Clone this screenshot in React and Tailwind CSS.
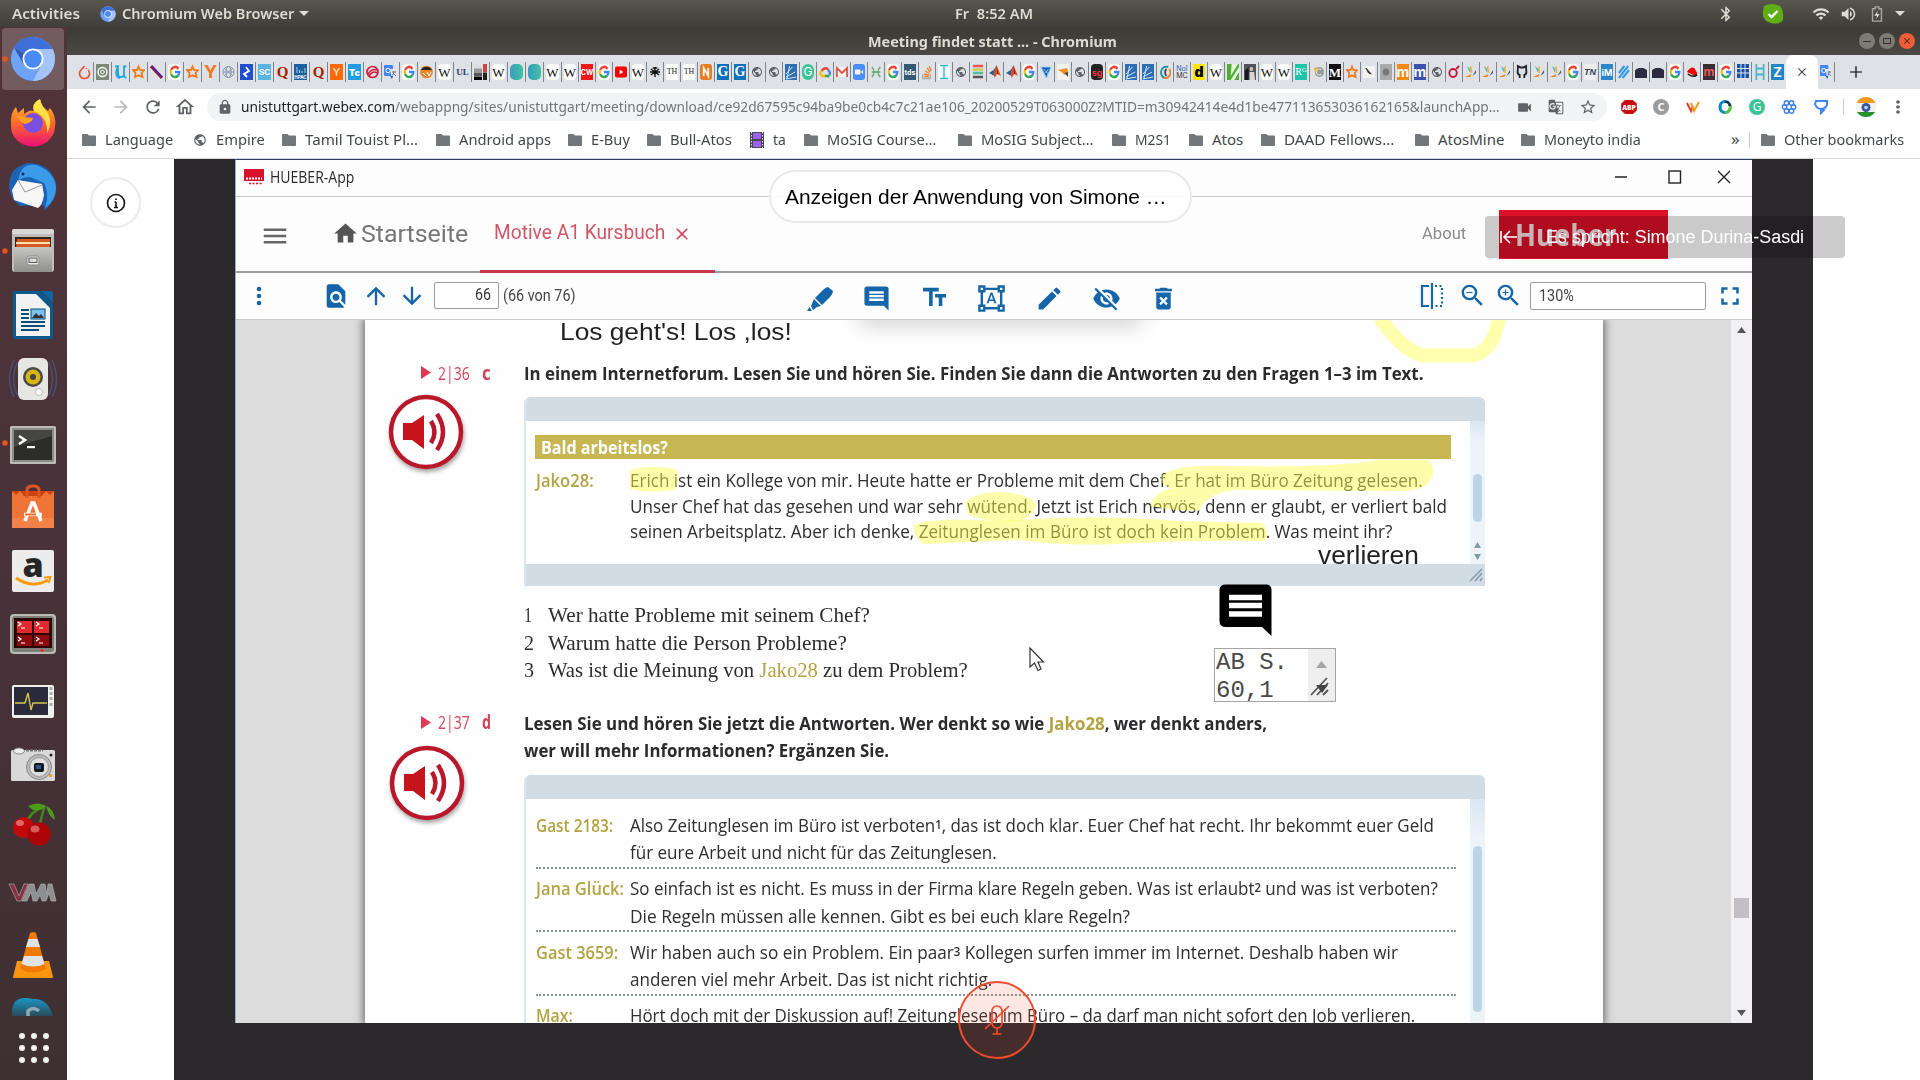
import React, { useLayoutEffect, useRef, useState } from "react";
import {
  MdComment, MdTextFields, MdEdit, MdVisibilityOff, MdFindInPage, MdArrowUpward, MdArrowDownward,
  MdDeleteForever, MdFormatShapes, MdZoomIn, MdZoomOut, MdFullscreen, MdHome, MdMenu, MdClose,
  MdLock, MdVideocam, MdStarBorder, MdGTranslate, MdArrowBack, MdArrowForward, MdRefresh,
  MdOutlineHome, MdMoreVert, MdBluetooth, MdWifi, MdVolumeUp, MdPublic, MdAdd,
} from "react-icons/md";

/* One line of text stretched or condensed to a given width */
function T({ w, className = "", children }) {
  const ref = useRef(null);
  const [s, setS] = useState(1);
  useLayoutEffect(() => {
    const n = ref.current.offsetWidth;
    if (n) setS(w / n);
  }, [w]);
  return (
    <span className={"block shrink-0 whitespace-pre " + className} style={{ width: w }}>
      <span ref={ref} className="inline-block origin-left" style={{ transform: `scaleX(${s})` }}>{children}</span>
    </span>
  );
}

function ChromiumIcon({ className }) {
  return (
    <svg viewBox="0 0 48 48" className={className}>
      <circle cx="24" cy="24" r="23" fill="#6ea3f7" />
      <path d="M24 24 L4.500 12 A23 23 0 0 1 44.500 14 L24 14 Z" fill="#3f6fd8" />
      <path d="M24 14 H44.500 A23 23 0 0 1 23 47 L33 29 Z" fill="#a4c4fb" />
      <path d="M4.500 12 L14 29 L24 24 Z" fill="#3560bd" />
      <circle cx="24" cy="24" r="11" fill="#fff" />
      <circle cx="24" cy="24" r="9" fill="#4a8af4" />
    </svg>
  );
}

const dock = [
  <g>
    <circle cx="33" cy="32" r="22" fill="#6ea3f7" />
    <path d="M33 32 L14 20.500 A22 22 0 0 1 52.500 22 L33 22 Z" fill="#3f6fd8" />
    <path d="M33 22 H52.500 A22 22 0 0 1 33 54 L42 37 Z" fill="#a4c4fb" />
    <path d="M14 20.500 L23.500 37 L33 32 Z" fill="#3058b0" />
    <circle cx="33" cy="32" r="10.500" fill="#fff" />
    <circle cx="33" cy="32" r="8.700" fill="#4a8af4" />
  </g>,
  <g>
    <path d="M11 33 Q10 22 16 16 L18 22 L24 17 L24 23 Q30 18 34 20 Q31 13 40 8 Q41 15 48 20 L50 17 Q57 26 55 36 A22 20 0 0 1 11 35 Z" fill="url(#ff)" />
    <path d="M34 20 Q31 13 40 8 Q41 15 48 22 Q53 32 47 42 Q48 26 34 20 Z" fill="#fff04a" opacity=".85" />
    <circle cx="33" cy="32" r="10" fill="#7a4fe0" />
    <path d="M17 25 Q24 26 33 27 Q33 31 25 33 Q20 31 17 25 Z" fill="#ffa020" />
  </g>,
  <g>
    <path d="M9 31 Q9 12 28 8 Q50 8 56 28 Q58 44 44 56 Q46 50 42 50 L20 51 Q10 44 9 31 Z" fill="#1d62b5" />
    <path d="M20 18 Q24 8 36 10 Q54 16 56 32 Q56 46 45 53 Q50 38 44 28 L30 22 Q22 22 18 26 Z" fill="#3c9be8" />
    <path d="M12 35 L18 25 L42 29 L44 40 Q42 51 38 53 L14 45 Z" fill="#f6f6f6" />
    <path d="M18 25 L25 37 L42 30" fill="none" stroke="#999" />
    <circle cx="23" cy="19" r="1.500" fill="#0c2c55" />
  </g>,
  <g>
    <rect x="12" y="10" width="42" height="43" rx="3" fill="#bdbdbb" />
    <rect x="12" y="10" width="42" height="5" rx="2" fill="#d8d8d6" />
    <rect x="15" y="18" width="36" height="11" fill="#33241c" />
    <path d="M17 20 H50 V29 H16 Z" fill="#d65a1e" />
    <rect x="16" y="23" width="34" height="2" fill="#fbe0b0" />
    <path d="M14 28 H52 V53 H14 Z" fill="url(#gr)" />
    <rect x="27" y="37" width="12" height="9" rx="2" fill="#eee" stroke="#888" />
    <rect x="29" y="39" width="8" height="4.500" fill="#ddd" stroke="#555" />
  </g>,
  <g>
    <path d="M15 8 H40 L53 21 V54 Q53 56 51 56 H15 Q13 56 13 54 V10 Q13 8 15 8 Z" fill="#0a5a8c" />
    <path d="M41 8 H51 Q53 8 53 10 V20 Z" fill="#0a69a5" />
    <path d="M16 11 H36 L50 25 V53 H16 Z" fill="#f2f2f2" />
    <path d="M21 27 H29 M21 31 H29 M21 35 H29 M21 39 H45 M21 43 H45 M21 47 H39" stroke="#0b4f7d" strokeWidth="2" />
    <rect x="31" y="26" width="14" height="10" fill="#7cc0ee" stroke="#0b4f7d" />
    <path d="M32 35 L36 30 L39 33 L41 31 L44 35 Z" fill="#333" />
  </g>,
  <g>
    <path d="M14 13 Q5 32 14 50 M17 16 Q10 32 17 48 M52 13 Q61 32 52 50 M49 16 Q56 32 49 48" fill="none" stroke="#4c5c8a" strokeWidth="1.500" opacity=".7" />
    <rect x="18" y="11" width="30" height="42" rx="6" fill="#e6e6e2" />
    <circle cx="33" cy="30" r="10" fill="#4a4a48" />
    <circle cx="33" cy="30" r="7.500" fill="#d8b416" />
    <circle cx="33" cy="30" r="3" fill="#444" />
    <circle cx="39" cy="45" r="3.500" fill="#fff" stroke="#bbb" />
  </g>,
  <g>
    <rect x="10" y="15" width="46" height="38" rx="1.500" fill="#bcbcb8" />
    <rect x="12" y="17" width="42" height="34" fill="#8c8c88" />
    <rect x="14" y="19" width="38" height="30" fill="#2c2d2b" />
    <path d="M14 19 H52 L52 25 L14 36 Z" fill="#454644" />
    <path d="M19 25 L25 29 L19 33" fill="none" stroke="#fff" strokeWidth="2.500" />
    <rect x="27" y="35" width="8" height="2.200" fill="#fff" />
  </g>,
  <g>
    <path d="M12 16 H54 L54 53 H12 Z" fill="#ee7537" />
    <path d="M12 16 H54 L50 20 L46 16 L42 21 H24 L20 16 L16 20 Z" fill="#c9430f" />
    <path d="M27 23 V15 Q27 11 33 11 Q39 11 39 15 V23" fill="none" stroke="#dd5420" strokeWidth="3" />
    <path d="M12 43 H54 V53 H12 Z" fill="#f48248" />
    <path d="M25 46 L32 28 H34 L41 46 M24 39.500 H42" fill="none" stroke="#fff" strokeWidth="3.500" />
    <rect x="25" y="38.500" width="11" height="2" fill="#ee6c2c" />
  </g>,
  <g>
    <rect x="12" y="11" width="42" height="42" rx="2" fill="#ececec" />
    <text x="33" y="38" textAnchor="middle" fontFamily="Open Sans, sans-serif" fontWeight="800" fontSize="34" fill="#262626">a</text>
    <path d="M16 39 Q32 50 48 41" fill="none" stroke="#ff9900" strokeWidth="2.800" />
    <path d="M44 38.500 L50.500 38 L48.500 44" fill="none" stroke="#ff9900" strokeWidth="2" />
  </g>,
  <g>
    <rect x="10" y="11" width="46" height="40" rx="4" fill="#b9bcb4" />
    <rect x="12" y="13" width="42" height="36" rx="3" fill="#7c8078" />
    <rect x="14" y="15" width="38" height="30" fill="#2e0505" />
    <path d="M17 18 H32 V30 H17 Z M34 18 H49 V30 H34 Z" fill="#e12a2d" />
    <path d="M17 32 H32 V43 H17 Z M34 32 H49 V43 H34 Z" fill="#8a0c0e" />
    <path d="M18 19 l3 2 l-3 2 M36 19 l3 2 l-3 2 M18 34 l3 2 l-3 2 M36 34 l3 2 l-3 2 M21 25 h4 M39 25 h4 M21 40 h4 M39 40 h4" stroke="#fff" fill="none" strokeWidth="1.200" />
    <circle cx="42" cy="47.500" r="1.500" fill="#f22" />
  </g>,
  <g>
    <rect x="12" y="18" width="42" height="33" rx="2" fill="#f1f1ee" />
    <rect x="14" y="20" width="34" height="28" fill="#2b2a3a" />
    <path d="M15 36 H25 L28 26 L31 43 L33 36 H47" fill="none" stroke="#d3c44a" strokeWidth="1.400" />
    <path d="M51 20 v3 M51 25 v3 M51 30 v3 M51 36 v3" stroke="#aaa" strokeWidth="3" />
  </g>,
  <g>
    <rect x="11" y="19" width="44" height="31" rx="1.500" fill="#d9d9d9" />
    <ellipse cx="19" cy="20" rx="5.500" ry="3" fill="#eee" stroke="#888" />
    <path d="M26 19.500 H43" stroke="#777" strokeWidth="2" strokeDasharray="3 1" />
    <circle cx="39" cy="36" r="12.500" fill="#bbb" stroke="#888" />
    <circle cx="39" cy="36" r="9.500" fill="#dedede" stroke="#999" />
    <rect x="34" y="32" width="10" height="9" rx="2" fill="#14151d" />
    <rect x="36" y="34" width="5" height="4" fill="#2a5594" />
    <circle cx="51" cy="24" r="1.500" fill="#222" />
    <rect x="49" y="43" width="3" height="3" fill="#eda02c" />
  </g>,
  <g>
    <path d="M27 27 Q30 17 44 11 M40 30 Q42 18 45 11" fill="none" stroke="#3f8a15" strokeWidth="2.500" />
    <path d="M28 11 Q38 6 46 11 Q40 17 33 15 Z M46 11 Q54 14 55 25 Q49 22 46 11 Z" fill="#4e9a1a" />
    <circle cx="23.500" cy="32.500" r="10.500" fill="#c2090b" />
    <circle cx="39" cy="39" r="11.800" fill="#ac0507" />
    <ellipse cx="20" cy="28" rx="4" ry="3" fill="#ec8080" opacity=".8" />
    <ellipse cx="35" cy="34" rx="4.500" ry="3.500" fill="#ec8080" opacity=".7" />
  </g>,
  <g>
    <path d="M9 25 H14 L19 37 L24 25 H28 L21 42 H17 Z" fill="#8d2d45" stroke="#9d9d9d" strokeWidth=".8" />
    <path d="M22 42 L29 25 H34 L36 35 L41 25 H45 L47 35 L48 25 H52 L56 42 H51 L49 34 L46 42 H42 L40 36 L37 42 H33 L31 33 L27 42 Z" fill="#8d9090" stroke="#b9b9b9" strokeWidth=".6" />
  </g>,
  <g>
    <path d="M17 38 H49 L53 54 Q53 55 52 55 H14 Q13 55 13 54 Z" fill="#fb9410" />
    <path d="M30 10 Q33 8 36 10 L46 46 Q33 53 20 46 Z" fill="#f07a05" />
    <path d="M28.500 16 H37.500 L40 24 H26 Z M24 33 H42 L44.500 41 Q33 46 21.500 41 Z" fill="#dfe3e6" />
  </g>,
  <g>
    <path d="M12 29 V22 Q14 11 24 11 Q30 11 33 12 Q48 11 53 29 Z" fill="url(#sk)" />
    <path d="M28 29 V24 Q33 19 39 24" fill="none" stroke="#8fa9b5" strokeWidth="3.500" />
  </g>,
];

function Dock() {
  return (
    <aside className="flex w-[67px] shrink-0 flex-col bg-linear-to-b from-[#513439] via-[#49323a] to-[#3e3032]">
      <svg className="absolute h-0 w-0">
        <defs>
          <linearGradient id="ff" x1="0" y1="0" x2="0" y2="1"><stop offset="0" stopColor="#ffc52c" /><stop offset=".5" stopColor="#ff6a2a" /><stop offset="1" stopColor="#ea0f78" /></linearGradient>
          <linearGradient id="gr" x1="0" y1="0" x2="0" y2="1"><stop offset="0" stopColor="#c6c6c4" /><stop offset="1" stopColor="#8f8f8c" /></linearGradient>
          <linearGradient id="sk" x1="0" y1="0" x2="0" y2="1"><stop offset="0" stopColor="#1a96c4" /><stop offset="1" stopColor="#2a4a5a" /></linearGradient>
          <linearGradient id="teal" x1="0" y1="0" x2="1" y2="0"><stop offset="0" stopColor="#3b9ac4" /><stop offset="1" stopColor="#3fc59b" /></linearGradient>
        </defs>
      </svg>
      {dock.map((g, i) => (
        <div key={i} className={i === 15 ? "h-[30px] overflow-hidden" : "relative h-16"}>
          {i === 0 && <div className="absolute top-px left-0.5 h-[62px] w-[62px] rounded bg-white/20" />}
          <svg width="67" height="64" viewBox="0 0 67 64" className="relative block">
            {g}
            {(i === 0 || i === 3 || i === 6) && <circle cx="5" cy="32" r="2.700" fill="#e95420" />}
          </svg>
        </div>
      ))}
      <div className="grid grid-cols-3 gap-1.5 self-center pt-4">
        {Array.from({ length: 9 }, (_, i) => <div key={i} className="h-1.5 w-1.5 rounded-full bg-[#f4f2f0]" />)}
      </div>
    </aside>
  );
}

/* ---- favicons ---- */
const label = (t, cls) => (
  <span className={"flex h-4 w-full items-center justify-center leading-none " + cls}>{t}</span>
);
const pic = (children) => <svg viewBox="0 0 13 16" preserveAspectRatio="none" className="h-4 w-full">{children}</svg>;
const fav = {
  flame: pic(<g fill="none" stroke="#ee4c2c" strokeWidth="1.600"><path d="M6.500 2 L3 6 A5 5 0 1 0 10 6" /><path d="M8.500 4 v1" /></g>),
  swirl: pic(<g><rect width="13" height="16" fill="#7b8a76" /><circle cx="6.500" cy="8" r="4.500" fill="none" stroke="#fff" strokeWidth="1.300" /><circle cx="6.500" cy="8" r="1.800" fill="none" stroke="#fff" /></g>),
  uda: pic(<path d="M1 2.500 L4 2 V9 Q4 13 7 13 Q10 13 10 9 V2.500 H12.500 M10 10 Q10 14 12.500 13.500 M4 3 Q1 8 3 12 Q4 14 6 14" fill="none" stroke="#1fa8dc" strokeWidth="1.800" />),
  star: pic(<path d="M6.500 2.500 L8 6 L12 6.300 L9.500 9 L10.500 13 L6.500 11.300 L3 13 L3.500 9 L1 6 L5 6 Z" fill="none" stroke="#f07a1a" strokeWidth="1.800" />),
  feather: pic(<g><path d="M1 2 L12 14" stroke="#a3143c" strokeWidth="3" /><path d="M2 2 L12 13" stroke="#3a28c0" strokeWidth="1.300" /></g>),
  g: (
    <span className="flex h-4 w-full items-center justify-center rounded-sm bg-white">
      <svg viewBox="0 0 24 24" preserveAspectRatio="none" className="h-3.5 w-3" fill="none" strokeWidth="4.500">
        <path d="M19 6.500 A9 9 0 0 0 4 8.500" stroke="#ea4335" /><path d="M4 8.500 A9 9 0 0 0 4 15.500" stroke="#fbbc05" />
        <path d="M4 15.500 A9 9 0 0 0 18.500 18" stroke="#34a853" /><path d="M18.500 18 A9 9 0 0 0 20.800 12 H12" stroke="#4285f4" />
      </svg>
    </span>
  ),
  yo: label("Y", "font-['Inter'] text-[18px] font-bold text-[#f07a1a]"),
  mesh: pic(<g fill="none" stroke="#8a9ab5"><circle cx="6.500" cy="8" r="5.500" /><ellipse cx="6.500" cy="8" rx="2.500" ry="5.500" /><path d="M1 8 H12 M2 4 L11 12 M11 4 L2 12" /></g>),
  top: pic(<g><rect width="13" height="16" fill="#204ecf" /><path d="M6 3 L9 7 L4 10 L7 13" fill="none" stroke="#fff" strokeWidth="1.800" /></g>),
  sc: label("SC", "bg-[#5cb4e4] font-['Inter'] text-[8px] font-bold text-white"),
  q: label("Q", "font-['Liberation_Serif'] text-[15px] font-bold text-[#a82400]"),
  hp: (
    <span className="flex h-4 w-full flex-col items-center justify-end bg-[#1b5f9e] font-['Inter'] text-[4.500px] leading-none font-bold text-white">
      <svg viewBox="0 0 10 7" className="mb-0.5 h-[7px] w-2.5"><path d="M1 0 V6 M3.500 3 V6 M6 4 V6 M9 1 V6" stroke="#a8d0f0" /></svg>HPAC
    </span>
  ),
  yb: label("Y", "bg-[#ff6a00] font-['Inter'] text-[11px] text-white"),
  tc: label("Tc", "bg-[#1f9de0] font-['Inter'] text-[9px] font-black text-white"),
  red: pic(<g fill="none" stroke="#d02040" strokeWidth="1.700"><circle cx="6.500" cy="8" r="5.500" /><path d="M2 10 Q6 4 11 6 M3 12 Q7 6 11 9" /></g>),
  tr: pic(<g><rect y="1" width="9" height="11" rx="1" fill="#4285f4" /><path d="M6 5 H13 V15 H8 Z" fill="#dfe6f2" /><path d="M9 12 L8 15 L6 12 Z" fill="#2f5bb0" /><circle cx="4" cy="6.500" r="2.200" fill="none" stroke="#fff" /><path d="M8 8 H12 M10 7 V8 L8.500 11.500 M9 9 L12 12" stroke="#777" fill="none" /></g>),
  badge: pic(<g><circle cx="6.500" cy="8" r="6.300" fill="#e8862a" /><path d="M1 6 A6.300 6.300 0 0 1 12 6 Z" fill="#2a2320" /><path d="M3 9 L6 12 M7 8 L9 12 L11 8" stroke="#fff" fill="none" /></g>),
  w: label("W", "rounded-sm bg-white font-['Liberation_Serif'] text-[13px] text-[#111]"),
  ul: label("UL", "font-['Liberation_Serif'] text-[9px] font-bold text-[#24406e]"),
  bars: pic(<g><rect width="8" height="4" fill="#ddd" /><rect y="4.500" width="8" height="3.500" fill="#999" /><rect y="8.500" width="8" height="3.500" fill="#555" /><rect y="12.500" width="8" height="3.500" fill="#000" /><rect x="9" width="4" height="8" fill="#c44" /><rect x="9" y="8.500" width="4" height="7.500" fill="#222" /></g>),
  teal: pic(<rect width="13" height="16" rx="5" fill="url(#teal)" />),
  cw: label("CW", "bg-[#f01818] font-['Inter'] text-[7px] font-bold text-white"),
  yt: pic(<g><rect y="2.500" width="13" height="11" rx="2" fill="#f00" /><path d="M5 5.500 L9 8 L5 10.500 Z" fill="#fff" /></g>),
  bug: pic(<path d="M6.500 3 V13 M2 5 L11 11 M11 5 L2 11 M1 8 H12 M4 4 H9" stroke="#111" strokeWidth="1.500" />),
  th: label("TH", "bg-white font-['Liberation_Serif'] text-[8px] text-[#222]"),
  n: pic(<g><rect width="13" height="16" rx="3" fill="#e87e22" /><path d="M4 12 V4 L9 12 V4" fill="none" stroke="#fff" strokeWidth="1.800" /></g>),
  gb: label("G", "bg-[#1070b8] font-['Liberation_Serif'] text-[14px] font-bold text-white"),
  globe: <MdPublic className="h-4 w-full text-[#5f6368]" />,
  sun: pic(<g><rect width="13" height="16" fill="#2f6db5" /><path d="M1 15 L12 13 M1 13 L11 8 M1 10 L8 3 M2 15 L5 2" stroke="#dceaf8" /></g>),
  gram: label("G", "rounded-md bg-[#3cc39a] font-['Inter'] text-[12px] text-white"),
  cloud: pic(<g fill="none" strokeWidth="2.500"><path d="M3 7 A4 4 0 0 1 10 6" stroke="#ea4335" /><path d="M10 6 Q12.500 8 11.500 11" stroke="#4285f4" /><path d="M11.500 12 H6" stroke="#34a853" /><path d="M6 12 H3 Q0 9 3 7" stroke="#fbbc05" /></g>),
  gm: pic(<g><rect y="3" width="13" height="10" fill="#f2f2f2" /><path d="M1 13 V4 L6.500 9 L12 4 V13" fill="none" stroke="#dd4b39" strokeWidth="1.800" /></g>),
  zoom: pic(<g><rect width="13" height="16" rx="3" fill="#4a8cf7" /><rect x="2" y="5.500" width="6" height="5" rx="1" fill="#fff" /><path d="M8.500 8 L11 6 V10 Z" fill="#fff" /></g>),
  gx: pic(<path d="M2 3 Q7 8 2 13 M11 3 Q6 8 11 13 M2 8 H11" fill="none" stroke="#5ba86e" strokeWidth="1.300" />),
  tds: label("tds", "bg-[#355876] font-['Inter'] text-[7px] font-bold text-white"),
  so: pic(<g fill="none" strokeWidth="1.400"><path d="M2 10 V14.500 H10 V10" stroke="#aaa" /><path d="M3.500 12.500 H8.500 M3.500 10 L8.500 11 M4.500 7 L9 9.500 M6.500 4 L10 8 M9 2 L11 7" stroke="#f48024" /></g>),
  i: pic(<g><rect width="13" height="16" fill="#fff" /><path d="M2 1.500 H11 M2 14.500 H11 M6.500 1.500 V14.500" stroke="#35b5c8" strokeWidth="1.500" /></g>),
  str: pic(<g><path d="M1 2 H12" stroke="#e55" strokeWidth="2.500" /><path d="M1 5.500 H12" stroke="#cc5" strokeWidth="2.500" /><path d="M1 9 H12" stroke="#5b9" strokeWidth="2.500" /><path d="M1 13 H12" stroke="#555" strokeWidth="2.500" /></g>),
  mat: pic(<g><path d="M0 9 L5 6 L8 2 L6 12 Z" fill="#2a5ca0" /><path d="M8 1 L13 12 L9 10 L6 14 L5 9 Z" fill="#d9541e" /><path d="M8 1 L10 10 L9 10 Z" fill="#5a1208" /></g>),
  tri: pic(<path d="M1 3 H12 L7 14 Z M4 5 L9 10 M9 5 L6 9" fill="#1d5fc0" stroke="#8fd0f0" />),
  hand: pic(<g><rect width="13" height="16" fill="#f3f1ec" /><path d="M1 6 L11 4 L12 8 L8 11 L5 8 Z" fill="#f09020" /><path d="M8 9 L12 8 V13 Z" fill="#444" /></g>),
  sg: label("sg", "rounded-sm bg-[#222] font-['Inter'] text-[9px] font-bold text-[#e34]"),
  c2: pic(<g fill="none" strokeWidth="1.900"><path d="M10 3 A5.500 5.500 0 1 0 6 14" stroke="#1b8fae" /><path d="M6 14 A5.500 5.500 0 0 0 11 5" stroke="#e9822a" /><path d="M8 5 Q5 8 8 12" stroke="#444" /></g>),
  noi: label(<span className="text-center font-['Inter'] text-[7px] leading-[7.500px]"><span className="text-[#2a6ab8]">NoI</span><br />MC</span>, "text-[#333]"),
  d: label("d", "bg-[#ffe600] font-['Inter'] text-[14px] font-black text-black"),
  green: pic(<g><rect width="13" height="16" fill="#e6f4dc" /><path d="M0 0 H5 L4 12 L12 0 H13 V3 L4 16 H0 Z" fill="#4cae32" /><path d="M8 16 L13 8 V16 Z" fill="#4cae32" /></g>),
  photo: pic(<g><rect width="13" height="16" fill="#50545c" /><path d="M1 16 V7 L5 3 V16 Z" fill="#16181c" /><circle cx="8" cy="5" r="2" fill="#d8c0b0" /><path d="M6 8 H11 L12 16 H6 Z" fill="#d5d5d8" /></g>),
  rg: label(<span>R<sup className="text-[7px]">G</sup></span>, "bg-[#1cc4ac] font-['Liberation_Serif'] text-[10px] text-white"),
  moon: pic(<g><circle cx="8" cy="8" r="5" fill="#999" /><path d="M2 4 L5 3 L6 7 L4 10 Z" fill="#f0b428" /><path d="M10 6 A3 3 0 1 0 10 10" fill="none" stroke="#ddd" strokeWidth="1.200" /></g>),
  mb: label("M", "bg-[#111] font-['Liberation_Serif'] text-[13px] font-bold text-white"),
  bird: pic(<g><rect y="2" width="13" height="12" fill="#f4f2ef" /><path d="M3 4 L9 10 L6 9 Z" fill="#333" stroke="#333" /></g>),
  gray: pic(<g><rect width="13" height="16" fill="#aaa" /><circle cx="6.500" cy="8" r="3.500" fill="#777" /></g>),
  mo: label("m", "bg-[#f58a12] font-['Inter'] text-[14px] font-bold text-white"),
  mu: label("m", "bg-[#3c50b0] font-['Inter'] text-[14px] font-bold text-white"),
  o: pic(<g fill="none" stroke="#c8143c" strokeWidth="2"><circle cx="5.500" cy="9" r="4" /><path d="M9 5 L12 2" /></g>),
  arr: pic(<g><path d="M2 2 L7 6 L5 8 Z" fill="#3fb2d8" /><path d="M0 13 L7 10 L6 13 Z" fill="#e58a2a" /><path d="M5 3 L7 2 L8 9 L6 9 Z" fill="#efb63c" /><path d="M8 12 L12 6 L12 9 Z" fill="#3a5b8c" /></g>),
  git: pic(<path d="M4 14 V11 Q1 10 2 6 L2 2 L5 3.500 H8 L11 2 L11 6 Q12 10 9 11 V14" fill="none" stroke="#24292e" strokeWidth="2" />),
  tn: label("TN", "bg-[#eceef0] font-['Liberation_Sans'] text-[9px] italic font-bold text-[#345]"),
  im: label("iM", "bg-[#2b86c8] font-['Inter'] text-[9px] font-bold text-white"),
  sl: pic(<path d="M1 9 L7 2 M1 14 L11 2 M5 14 L12 6" stroke="#2f9ae8" strokeWidth="2.200" />),
  cam: pic(<path d="M0 6 L4 4 H9 L13 6 V14 H0 Z" fill="#2e2a40" />),
  hat: pic(<g><path d="M1 8 Q5 2 9 4 L12 9 Q13 12 8 11 Z" fill="#e00" /><path d="M2 10 Q7 14 12 11" stroke="#111" strokeWidth="1.500" fill="none" /></g>),
  md: label("m", "bg-[#3a2c32] font-['Inter'] text-[12px] font-bold text-[#e65a5a]"),
  grid: pic(<g><rect width="13" height="14" fill="#1a54a0" /><path d="M0 4.500 H13 M0 9 H13 M4.300 0 V14 M8.700 0 V14" stroke="#e4ebf4" /></g>),
  h: pic(<path d="M2.500 0 V16 M10.500 0 V16 M2.500 4.500 H10.500 M2.500 10.500 H10.500" stroke="#49b8c8" strokeWidth="1.800" />),
  z: label("Z", "bg-[#2285c8] font-['Inter'] text-[13px] font-bold text-white"),
};
const wide = "flame swirl uda star feather g star yo mesh top sc q hp q yb tc red tr g badge w ul bars w teal teal w".split(" ");
const narrow = ("w cw g yt w bug th th n gb gb globe globe sun gram cloud gm zoom gx g tds so i globe str mat mat g tri hand globe sg g sun sun c2 noi d w green photo w w " +
  "rg moon mb star bird gray mo mu globe o arr arr arr git arr arr g tn im sl cam cam g hat md g grid h z").split(" ");

function TabStrip() {
  return (
    <div className="flex h-[34px] items-center bg-[#dee1e6] pl-[9px]">
      {wide.map((k, i) => (
        <div key={i} className="flex h-5 w-[18px] shrink-0 items-center border-r border-[#80858b] px-0.5">{fav[k]}</div>
      ))}
      {narrow.map((k, i) => (
        <div key={i} className={"flex h-5 w-[17px] shrink-0 items-center border-[#80858b] px-0.5 " + (k === "z" ? "" : "border-r")}>{fav[k]}</div>
      ))}
      <div className="flex h-[34px] w-8 shrink-0 items-center justify-center rounded-t-lg bg-white"><MdClose className="h-3.5 w-3.5 text-[#45494d]" /></div>
      <div className="flex h-5 w-[17px] shrink-0 items-center border-r border-[#80858b] px-0.5">{fav.tr}</div>
      <MdAdd className="ml-[11px] h-5 w-5 text-[#3c4043]" />
    </div>
  );
}

const bookmarks = [
  ["f", "Language", 68, 20], ["g", "Empire", 49, 17], ["f", "Tamil Touist Pl…", 113, 18], ["f", "Android apps", 92, 17],
  ["f", "E-Buy", 39, 17], ["f", "Bull-Atos", 62, 18], ["t", "ta", 13, 18], ["f", "MoSIG Course…", 109, 22],
  ["f", "MoSIG Subject…", 112, 19], ["f", "M2S1", 36, 18], ["f", "Atos", 31, 18], ["f", "DAAD Fellows…", 110, 21],
  ["f", "AtosMine", 66, 17], ["f", "Moneyto india", 97, 0],
];
const Folder = () => (
  <svg viewBox="0 0 14 12" className="h-3 w-3.5 shrink-0"><path d="M1 0 H5.500 L7 1.500 H13 Q14 1.500 14 2.500 V11 Q14 12 13 12 H1 Q0 12 0 11 V1 Q0 0 1 0 Z" fill="#72777b" /></svg>
);

function Browser() {
  const nav = "h-5 w-5 shrink-0 text-[#5f6368]";
  return (
    <div className="font-['Noto_Sans',sans-serif]">
      <div className="flex h-7 items-center bg-linear-to-b from-[#3b3a35] to-[#4b4943]">
        <T w={249} className="ml-[801px] text-[15px] leading-[26px] font-bold text-[#dfdbd2]">Meeting findet statt ... - Chromium</T>
        <div className="ml-auto flex gap-1 pr-[5px]">
          <div className="flex h-4 w-4 items-center justify-center rounded-full bg-[#7d7b73]"><div className="h-px w-2 bg-[#33322e]" /></div>
          <div className="flex h-4 w-4 items-center justify-center rounded-full bg-[#7d7b73]"><div className="h-1.5 w-2 border border-[#33322e]" /></div>
          <div className="flex h-4 w-4 items-center justify-center rounded-full bg-[#ea5f38]"><MdClose className="h-2.5 w-2.5 text-[#5a1e08]" /></div>
        </div>
      </div>
      <TabStrip />
      <div className="flex h-9 items-center bg-white">
        <MdArrowBack className={nav + " ml-3"} />
        <MdArrowForward className="ml-3 h-5 w-5 shrink-0 text-[#b8babd]" />
        <MdRefresh className={nav + " ml-3"} />
        <MdOutlineHome className="ml-[11px] h-[22px] w-[22px] shrink-0 text-[#5f6368]" />
        <div className="ml-[11px] flex h-7 w-[1400px] shrink-0 items-center rounded-full bg-[#f1f3f4] pl-2.5">
          <MdLock className="h-4 w-4 text-[#5f6368]" />
          <T w={1259} className="ml-2 pb-0.5 text-[15px] leading-[26px] text-[#72767a]">
            <span className="text-[#202124]">unistuttgart.webex.com</span>/webappng/sites/unistuttgart/meeting/download/ce92d67595c94ba9be0cb4c7c21ae106_20200529T063000Z?MTID=m30942414e4d1be477113653036162165&amp;launchApp…
          </T>
          <MdVideocam className="ml-4 h-[17px] w-[17px] text-[#5f6368]" />
          <MdGTranslate className="ml-[15px] h-4 w-4 text-[#5f6368]" />
          <MdStarBorder className="ml-[15px] h-[18px] w-[18px] text-[#5f6368]" />
        </div>
        <div className="ml-[14px] flex shrink-0 items-center gap-4">
          <svg viewBox="0 0 18 18" className="h-[18px] w-4 scale-x-110"><path d="M5 1 H13 L17 5 V13 L13 17 H5 L1 13 V5 Z" fill="#c70d0d" /><text x="9" y="12.300" fontSize="8" fontWeight="800" fill="#fff" textAnchor="middle" fontFamily="Open Sans, sans-serif" textLength="14" lengthAdjust="spacingAndGlyphs">ABP</text></svg>
          <div className="flex h-4 w-4 items-center justify-center rounded-full bg-[#9b9b9b] text-[11px] leading-4 font-bold text-white">C</div>
          <svg viewBox="0 0 16 16" className="h-4 w-4" fill="none" strokeWidth="2"><path d="M2 4 L6 12 L8 7" stroke="#e0402a" /><path d="M6 4 L9 12 L14 3" stroke="#f09a20" /></svg>
          <svg viewBox="0 0 16 16" className="h-4 w-4" fill="none" strokeWidth="3.200"><path d="M8 2.500 A5 5.500 0 1 0 8 13.500" stroke="#0d86c8" /><path d="M8 13.500 A5 5.500 0 0 0 12.500 5" stroke="#5cc04a" /><path d="M13 7 Q12 2.500 8 2.500" stroke="#12355a" strokeWidth="2.500" /></svg>
          <div className="flex h-4 w-4 items-center justify-center rounded-full bg-[#3cc39a] text-[12px] leading-4 text-white">G</div>
          <svg viewBox="0 0 16 16" className="h-4 w-4" fill="none" stroke="#3f7fe0" strokeWidth="1.400"><circle cx="5.500" cy="4" r="2.200" /><circle cx="10.500" cy="4" r="2.200" /><circle cx="3.500" cy="8" r="2.200" /><circle cx="12.500" cy="8" r="2.200" /><circle cx="5.500" cy="12" r="2.200" /><circle cx="10.500" cy="12" r="2.200" /></svg>
          <svg viewBox="0 0 16 16" className="h-4 w-4" fill="none" stroke="#3f86ee" strokeWidth="2"><path d="M3 2 H14 V6 Q12 10 8 10 Q4 10 2 5 Z M8 10 V14 L12 10" /></svg>
        </div>
        <div className="ml-3.5 h-4 w-px bg-[#c8cacc]" />
        <svg viewBox="0 0 22 22" className="ml-[11px] h-[22px] w-[22px]"><circle cx="11" cy="11" r="10.500" fill="#f2f2ee" /><path d="M1.500 7 A10.500 10.500 0 0 1 20.500 7 Z" fill="#f39a1e" /><path d="M2 16 A10.500 10.500 0 0 0 20 16 Z" fill="#25922c" /><circle cx="11" cy="11.500" r="4.500" fill="#3a56a0" /><circle cx="11" cy="11.500" r="1.800" fill="#c7d2ea" /></svg>
        <MdMoreVert className="ml-[11px] h-5 w-5 scale-x-110 text-[#5f6368]" />
      </div>
      <div className="flex h-[34px] items-center border-b border-[#d5d7da] bg-white pb-1 pl-[15px] text-[15px] leading-[26px] text-[#44474a]">
        {bookmarks.map(([k, t, w, gap], i) => (
          <div key={i} className="flex shrink-0 items-center gap-[9px]" style={{ marginRight: gap }}>
            {k === "f" && <Folder />}
            {k === "g" && <MdPublic className="h-4 w-3.5 text-[#5f6368]" />}
            {k === "t" && <svg viewBox="0 0 14 16" className="h-4 w-3.5"><rect width="14" height="16" fill="#4a4458" /><rect x="3" y="1" width="8" height="6" fill="#9a62ea" /><rect x="3" y="9" width="8" height="6" fill="#9a62ea" /><path d="M1.500 0 V16 M12.500 0 V16" stroke="#ddd" strokeDasharray="1.500 1.500" /></svg>}
            <T w={w} className="pb-0.5">{t}</T>
          </div>
        ))}
        <span className="ml-[90px] w-2 pb-0.5 text-[17px]">»</span>
        <span className="ml-2.5 h-4 w-px bg-[#c8cacc]" />
        <div className="ml-[11px] flex items-center gap-[9px]"><Folder /><T w={120} className="pb-0.5">Other bookmarks</T></div>
      </div>
    </div>
  );
}

function SystemBar() {
  return (
    <div className="flex h-[27px] shrink-0 items-center bg-linear-to-b from-[#5a564e] to-[#3f3e39] font-['Noto_Sans',sans-serif] text-[15px] leading-[27px] font-semibold text-[#dfdbd2]">
      <T w={68} className="ml-3">Activities</T>
      <ChromiumIcon className="ml-5 h-4 w-4" />
      <T w={172} className="ml-1.5">Chromium Web Browser</T>
      <svg viewBox="0 0 10 5" className="ml-[5px] h-[5px] w-2.5"><path d="M0 0 H10 L5 5 Z" fill="#dfdbd2" /></svg>
      <T w={78} className="ml-[646px]">Fr  8:52 AM</T>
      <div className="ml-auto flex items-center pr-[15px]">
        <MdBluetooth className="h-5 w-[18px]" />
        <svg viewBox="0 0 22 22" className="ml-[27px] h-[22px] w-[22px]"><path d="M2 3 Q10 -1 18 3 Q22 8 21 17 Q18 22 9 20 Q0 18 1 9 Z" fill="#5fae16" /><path d="M6.500 11 L9.500 14 L15.500 8" stroke="#fff" strokeWidth="2.300" fill="none" /></svg>
        <MdWifi className="ml-7 h-[18px] w-[18px]" />
        <MdVolumeUp className="ml-[9px] h-[18px] w-[19px]" />
        <svg viewBox="0 0 14 18" className="ml-3 h-4 w-3.5"><path d="M5 1 H9 V3 H12 V17 H2 V3 H5 Z" fill="none" stroke="#a8a59c" strokeWidth="1.600" /><path d="M8 5 L4 11 H7 L6 15 L10 9 H7 Z" fill="#dfdbd2" /></svg>
        <svg viewBox="0 0 10 5" className="ml-[11px] h-[5px] w-2.5"><path d="M0 0 H10 L5 5 Z" fill="#dfdbd2" /></svg>
      </div>
    </div>
  );
}

function Speaker({ className }) {
  return (
    <svg viewBox="0 0 80 84" className={"h-[84px] w-20 shrink-0 drop-shadow-[1px_3px_2px_rgba(0,0,0,0.35)] " + className}>
      <circle cx="38" cy="39" r="35" fill="#fff" stroke="#b9172a" strokeWidth="4.500" />
      <path d="M15 30 H24 L36 22 V56 L24 47 H15 Z" fill="#c5141b" />
      <path d="M43 28 Q50 39 43 50 M49 21 Q61 39 49 57" fill="none" stroke="#b9172a" strokeWidth="4.500" />
    </svg>
  );
}

function Heading({ track, letter, widths, children }) {
  return (
    <div className="flex">
      <div className="flex w-[159px] shrink-0 items-center self-start pl-[56px] text-[#d2445c]">
        <svg viewBox="0 0 10 13" className="h-[13px] w-2.5"><path d="M0 0 L10 6.500 L0 13 Z" fill="#e03a50" /></svg>
        <T w={32} className="ml-[7px] text-[17.500px]">{track}</T>
        <T w={9} className="ml-3 text-[19px] font-bold">{letter}</T>
      </div>
      <div>
        {React.Children.map(children, (c, i) => <T w={widths[i]} className="text-[18.500px] font-bold text-[#2c2a2d]">{c}</T>)}
      </div>
    </div>
  );
}

function ScrollRail({ className, children }) {
  return <div className={"flex w-[15px] shrink-0 flex-col items-center bg-linear-to-b from-[#dbe6f0] to-[#eef3f7] to-15% " + className}>{children}</div>;
}

function Post({ name, nw, lines, last }) {
  return (
    <div className="h-[63.500px] w-[920px]">
      <div className={"flex h-[56px] " + (last ? "" : "border-b-2 border-dotted border-[#84948f]")}>
        <div className="w-[94px] shrink-0 text-[#b3a343]"><T w={nw} className="font-semibold">{name}</T></div>
        <div>{lines.map(([t, w], i) => <T key={i} w={w} className="text-[#302e30]">{t}</T>)}</div>
      </div>
    </div>
  );
}

const Sup = ({ children }) => <span className="inline-block -translate-y-[3px] text-[12px] font-semibold">{children}</span>;

function BookPage() {
  return (
    <div className="relative h-[703px] w-[1238px] shrink-0 overflow-hidden bg-[#fefefe] font-['Open_Sans',sans-serif] shadow-[0_0_8px_2px_rgba(0,0,0,0.5)]">
      <T w={232} className="ml-[195px] h-[23px] font-['Liberation_Sans',sans-serif] text-[24.500px] leading-[23px] text-[#222]">Los geht's! Los ,los!</T>
      <div className="mt-[15.600px] leading-7">
        <Heading track="2|36" letter="c" widths={[899]}>
          <span>In einem Internetforum. Lesen Sie und hören Sie. Finden Sie dann die Antworten zu den Fragen 1–3 im Text.</span>
        </Heading>
      </div>
      <div className="mt-[10.400px] flex h-[189px]">
        <div className="w-[159px] shrink-0"><Speaker className="mt-[-4px] ml-[23px]" /></div>
        <div className="flex w-[961px] flex-col overflow-hidden rounded-t-md border-l-2 border-[#dde6ed]">
          <div className="h-6 bg-[#d1dce5]" />
          <div className="flex h-[143px] justify-between">
            <div className="pt-3.5 pl-[9px]">
              <div className="h-6 w-[916px] bg-[#c7b753] pl-1.5 text-[18.500px] leading-6 font-bold text-white"><T w={127}>Bald arbeitslos?</T></div>
              <div className="mt-[9px] flex pl-px text-[18px] leading-[25.600px]">
                <div className="w-[94px] shrink-0 text-[#b3a343]"><T w={58} className="font-semibold">Jako28:</T></div>
                <div className="text-[#302e30]">
                  <T w={793}>Erich ist ein Kollege von mir. Heute hatte er Probleme mit dem Chef. Er hat im Büro Zeitung gelesen.</T>
                  <T w={817}>Unser Chef hat das gesehen und war sehr wütend. Jetzt ist Erich nervös, denn er glaubt, er verliert bald</T>
                  <T w={762}>seinen Arbeitsplatz. Aber ich denke, Zeitunglesen im Büro ist doch kein Problem. Was meint ihr?</T>
                </div>
              </div>
            </div>
            <ScrollRail className="pt-[53px]">
              <div className="h-12 w-[9px] rounded-full bg-[#b9d5e6]" />
              <svg viewBox="0 0 7 20" className="mt-5 h-5 w-[7px]"><path d="M0 6 L3.500 0 L7 6 Z M0 12 H7 L3.500 18 Z" fill="#7f99a6" /></svg>
            </ScrollRail>
          </div>
          <div className="flex h-[22px] items-center justify-end bg-[#d1dce5] pr-0.5">
            <svg viewBox="0 0 14 14" className="h-3.5 w-3.5"><path d="M1 13 L13 1 M6 13 L13 5 M11 13 L13 10" stroke="#8a9aa5" strokeWidth="1.500" /></svg>
          </div>
        </div>
      </div>
      <div className="mt-[15.400px] ml-[159px] font-['Liberation_Serif',serif] text-[22px] leading-[27.200px] text-[#2e2c2e]">
        <div className="flex gap-[9px]"><T w={8} className="mr-[7px]">1</T><T w={322}>Wer hatte Probleme mit seinem Chef?</T></div>
        <div className="flex gap-[9px]"><T w={10} className="mr-[5px]">2</T><T w={299}>Warum hatte die Person Probleme?</T></div>
        <div className="flex gap-[9px]"><T w={10} className="mr-[5px]">3</T><T w={420}>Was ist die Meinung von <span className="text-[#b3a343]">Jako28</span> zu dem Problem?</T></div>
      </div>
      <div className="mt-[25.800px] leading-[27.600px]">
        <Heading track="2|37" letter="d" widths={[743, 365]}>
          <span>Lesen Sie und hören Sie jetzt die Antworten. Wer denkt so wie <span className="text-[#b3a343]">Jako28</span>, wer denkt anders,</span>
          <span>wer will mehr Informationen? Ergänzen Sie.</span>
        </Heading>
      </div>
      <div className="mt-[11px] flex">
        <div className="w-[159px] shrink-0"><Speaker className="mt-[-31px] ml-6" /></div>
        <div className="h-[300px] w-[961px] shrink-0 overflow-hidden rounded-t-md border-l-2 border-[#dde6ed]">
          <div className="h-6 bg-[#d1dce5]" />
          <div className="flex h-[270px] justify-between">
            <div className="pt-[14px] pl-[10px] text-[18px] leading-[25.500px]">
              <Post name="Gast 2183:" nw={77} lines={[[<>Also Zeitunglesen im Büro ist verboten<Sup>1</Sup>, das ist doch klar. Euer Chef hat recht. Ihr bekommt euer Geld</>, 804], ["für eure Arbeit und nicht für das Zeitunglesen.", 367]]} />
              <Post name="Jana Glück:" nw={88} lines={[[<>So einfach ist es nicht. Es muss in der Firma klare Regeln geben. Was ist erlaubt<Sup>2</Sup> und was ist verboten?</>, 808], ["Die Regeln müssen alle kennen. Gibt es bei euch klare Regeln?", 500]]} />
              <Post name="Gast 3659:" nw={82} lines={[[<>Wir haben auch so ein Problem. Ein paar<Sup>3</Sup> Kollegen surfen immer im Internet. Deshalb haben wir</>, 768], ["anderen viel mehr Arbeit. Das ist nicht richtig.", 362]]} />
              <Post name="Max:" nw={37} last lines={[["Hört doch mit der Diskussion auf! Zeitunglesen im Büro – da darf man nicht sofort den Job verlieren.", 785]]} />
            </div>
            <ScrollRail className="pt-[47px]"><div className="h-[166px] w-[9px] rounded-full bg-[#b9d5e6]" /></ScrollRail>
          </div>
        </div>
      </div>

      {/* reader's annotations lying over the page */}
      <svg className="absolute top-0 left-0 h-[703px] w-[1238px]" viewBox="365 320 1238 703">
        <path d="M1380 318 Q1402 350 1423 355.500 H1472 Q1493 352 1499 318" fill="none" stroke="#ffffae" strokeWidth="14" />
        <g fill="#ffff50" fillOpacity=".48">
          <path d="M630 470 Q652 464 676 469 Q682 480 674 490 Q650 494 630 489 Z" />
          <path d="M1162 475 Q1175 464 1230 466 Q1330 468 1380 460 L1428 460 Q1438 470 1430 480 Q1426 492 1390 491 L1235 490 Q1205 494 1200 510 Q1178 512 1150 506 Q1156 490 1172 489 Q1158 484 1162 475 Z" />
          <path d="M965 503 Q975 492 1000 492 Q1026 493 1036 503 Q1036 515 1020 521 Q985 523 968 514 Z" />
          <path d="M914 525 Q930 517 1000 521 Q1100 514 1180 521 L1262 523 Q1272 534 1264 541 Q1190 540 1115 544 Q1060 546 1020 540 L924 544 Q912 536 914 525 Z" />
        </g>
        <path d="M1030 648 V667 L1034.500 663 L1038 670.500 L1041 669 L1038 662 H1043.500 Z" fill="#fff" stroke="#333" strokeWidth="1.200" />
        <path d="M1226 584.500 H1266 Q1271.500 584.500 1271.500 590 V636 L1262 627 H1226 Q1219.500 627 1219.500 621 V590 Q1219.500 584.500 1226 584.500 Z" fill="#000" />
        <path d="M1229 597.500 H1262 M1229 605.500 H1262 M1229 614 H1262" stroke="#fff" strokeWidth="5.500" />
      </svg>
      <T w={101} className="absolute top-[221px] left-[953px] font-['Liberation_Sans',sans-serif] text-[25px] leading-[28px] text-[#222]">verlieren</T>
      <div className="absolute top-[328px] left-[849px] flex h-[54px] w-[122px] justify-between overflow-hidden border border-[#a5a5a5] bg-white">
        <div className="pl-px font-['Liberation_Mono',monospace] text-[24px] leading-7 text-[#4a4a4a]"><T w={72}>AB S.</T><T w={58}>60,1</T></div>
        <div className="w-[27px] bg-[#eeeeef]">
          <svg viewBox="0 0 27 52" className="h-[52px] w-[27px]"><path d="M8 19 L13.500 12 L19 19 Z" fill="#a5a5a5" /><path d="M3 46 L19 29 M9 46 L20 34 M15 46 L20 41" stroke="#555" strokeWidth="1.800" /><path d="M8 36 H20 L14 44 Z" fill="#444" /></svg>
        </div>
      </div>
    </div>
  );
}

function HueberWindow() {
  const b = "shrink-0 text-[#1466a8]";
  return (
    <div className="flex h-[864px] w-[1517px] flex-col overflow-hidden border-t border-l border-t-[#2c3f63] border-l-[#8fb0cc] bg-[#fdfdfd] font-['Open_Sans',sans-serif]">
      <div className="flex h-[37px] shrink-0 items-center border-b border-[#c9c9cb] pb-0.5">
        <svg viewBox="0 0 20 16" className="ml-2 h-4 w-5"><rect width="20" height="12" fill="#d8122c" /><path d="M2 9.500 H18" stroke="#fff" strokeWidth="2" strokeDasharray="2 1" /><path d="M5 14.500 H18" stroke="#d8122c" strokeDasharray="2 1.500" strokeWidth="1.500" /></svg>
        <T w={84} className="ml-1.5 text-[16px] leading-[34px] text-[#2a2a2a]">HUEBER-App</T>
        <svg viewBox="0 0 116 14" className="ml-auto mr-[21px] h-3.5 w-[116px]" fill="none" stroke="#222" strokeWidth="1.400"><path d="M0 7 H12 M103 1 L115 13 M115 1 L103 13" /><rect x="54" y="1" width="11.500" height="12" /></svg>
      </div>
      <div className="flex h-[76px] shrink-0 border-b-2 border-[#9b9b9d]">
        <MdMenu className="mt-[24px] ml-[24px] h-[30px] w-[30px] text-[#666]" />
        <MdHome className="mt-[23px] ml-[42px] h-[27px] w-[27px] text-[#555]" />
        <T w={107} className="ml-0.5 font-['Roboto',sans-serif] text-[24px] leading-[75px] text-[#777]">Startseite</T>
        <div className="ml-[12px] -mb-0.5 flex w-[235px] border-b-[3px] border-[#c5384c] pl-[14px]">
          <T w={171} className="font-['Roboto',sans-serif] text-[19.500px] leading-[72px] text-[#cf5568]">Motive A1 Kursbuch</T>
          <MdClose className="mt-[27px] ml-[7px] h-5 w-5 text-[#cf4a5e]" />
        </div>
        <T w={44} className="ml-[707px] font-['Roboto',sans-serif] text-[17px] leading-[73px] text-[#8c8c8c]">About</T>
        <div className="mt-[13px] ml-[33px] h-[49px] w-[169px] bg-[#dc1027] pl-4"><T w={101} className="text-[31px] leading-[48px] font-bold text-[#fbdfe3]">Hueber</T></div>
      </div>
      <div className="flex h-[47px] shrink-0 items-center border-b border-[#c9c9cb] pb-px">
        <svg viewBox="0 0 6 20" className="ml-5 h-5 w-1.5"><g fill="#1466a8"><circle cx="3" cy="3" r="2.300" /><circle cx="3" cy="10" r="2.300" /><circle cx="3" cy="17" r="2.300" /></g></svg>
        <MdFindInPage className={b + " ml-[59px] h-7 w-[30px]"} />
        <MdArrowUpward className={b + " ml-[11px] h-7 w-7"} />
        <MdArrowDownward className={b + " ml-2 h-7 w-7"} />
        <div className="ml-2 h-[27px] w-[65px] rounded-xs border border-[#9b9b9b] bg-white pl-10"><T w={16} className="font-['Roboto',sans-serif] text-[16px] leading-6 text-[#333]">66</T></div>
        <T w={73} className="ml-1 font-['Roboto',sans-serif] text-[16px] leading-7 text-[#444]">(66 von 76)</T>
        <svg viewBox="0 0 26 24" className="mt-1.5 ml-[231px] h-6 w-[26px]" fill="#1466a8"><path d="M16 3 Q19 0 21 0 L26 4 Q26 7 23 10 L15 18 L8 11 Z" /><path d="M7 12 L14 19 L10 20 L6 23 L4 19 Z M0 24 L2.500 20 L5 24 Z" /></svg>
        <MdComment className={b + " mt-1.5 ml-[29px] h-[29px] w-[29px]"} />
        <MdTextFields className={b + " mt-1 ml-[29px] h-[29px] w-[29px]"} />
        <MdFormatShapes className={b + " mt-1.5 ml-7 h-[29px] w-[29px]"} />
        <MdEdit className={b + " mt-1.5 ml-[29px] h-[29px] w-[29px]"} />
        <MdVisibilityOff className={b + " mt-1.5 ml-7 h-[29px] w-[29px]"} />
        <MdDeleteForever className={b + " mt-1.5 ml-7 h-[29px] w-[29px]"} />
        <svg viewBox="0 0 24 26" className="ml-auto h-[26px] w-6" fill="none" stroke="#1466a8" strokeWidth="2.200"><path d="M9 3 H2 V23 H9 M12 0 V26" /><path d="M15 3 H22 V23 H15" strokeDasharray="2 2.500" /></svg>
        <MdZoomOut className={b + " ml-[14px] h-[29px] w-[29px]"} />
        <MdZoomIn className={b + " ml-[7px] h-[29px] w-[29px]"} />
        <div className="ml-[7px] h-7 w-[176px] rounded-xs border border-[#9b9b9b] bg-white pl-2"><T w={35} className="font-['Roboto',sans-serif] text-[16px] leading-[25px] text-[#444]">130%</T></div>
        <MdFullscreen className={b + " mr-[7px] ml-[9px] h-[30px] w-[30px]"} />
      </div>
      <div className="relative flex min-h-0 grow justify-between overflow-hidden bg-[#dcdcdc] pl-[129px]">
        <BookPage />
        <div className="absolute -top-5 left-[625px] h-5 w-[280px] rounded-full shadow-[0_4px_20px_3px_rgba(0,0,0,0.16)]" />
        <div className="flex w-[21px] flex-col items-center bg-[#f1f0f2]">
          <svg viewBox="0 0 9 6" className="mt-[7px] h-1.5 w-[9px]"><path d="M0 6 L4.500 0 L9 6 Z" fill="#555" /></svg>
          <div className="mt-[565px] h-5 w-[15px] bg-[#c2bfc5]" />
          <svg viewBox="0 0 9 6" className="mt-[92px] h-1.5 w-[9px]"><path d="M0 0 H9 L4.500 6 Z" fill="#555" /></svg>
        </div>
      </div>
    </div>
  );
}

export default function App() {
  return (
    <div className="flex h-[1080px] w-[1920px] flex-col overflow-hidden bg-white">
      <SystemBar />
      <div className="flex h-[1053px]">
        <Dock />
        <div className="flex w-[1853px] flex-col">
          <Browser />
          <main className="relative flex grow bg-white">
            <div className="w-[107px] shrink-0 pt-[18px] pl-[23px]">
              <div className="flex h-[51px] w-[51px] items-center justify-center rounded-full border-2 border-[#ececec]">
                <svg viewBox="0 0 20 20" className="h-5 w-5" fill="none" stroke="#111" strokeWidth="1.600"><circle cx="10" cy="10" r="8.500" /><path d="M10 9 V14.500 M8.500 9 H10 M8 14.500 H12 M10 5.500 V7" /></svg>
              </div>
            </div>
            <div className="h-[921px] w-[1639px] bg-[#2b292b] pl-[61px]"><HueberWindow /></div>

            {/* floating meeting controls */}
            <div className="absolute top-[11px] left-[702px] flex h-[53px] w-[423px] items-center rounded-full border-2 border-[#e9e9ea] bg-white/90 pl-[14px]">
              <T w={382} className="font-['Liberation_Sans',sans-serif] text-[20px] leading-[48px] text-black">Anzeigen der Anwendung von Simone …</T>
            </div>
            <div className="absolute top-[57px] left-[1418px] flex h-[42px] w-[360px] items-center rounded bg-black/20 pl-[15px]">
              <svg viewBox="0 0 18 16" className="h-4 w-[18px]" fill="none" stroke="#fff" strokeWidth="1.600"><path d="M1 2 V14 M17 8 H4 M10 2 L4 8 L10 14" /></svg>
              <T w={258} className="ml-7 font-['Liberation_Sans',sans-serif] text-[18px] leading-[42px] text-white">Es spricht: Simone Durina-Sasdi</T>
            </div>
            <div className="absolute top-[822px] left-[891px] flex h-[78px] w-[78px] items-center justify-center rounded-full border-2 border-[#f04a30] bg-[#f04a30]/13">
              <svg viewBox="0 0 26 32" className="h-8 w-[26px]" fill="none" stroke="#f04a30" strokeWidth="1.700"><rect x="8" y="2" width="10" height="22" rx="5" /><path d="M13 24 V30 M8.500 30 H17.500 M1 25 L25 2" /></svg>
            </div>
          </main>
        </div>
      </div>
    </div>
  );
}
